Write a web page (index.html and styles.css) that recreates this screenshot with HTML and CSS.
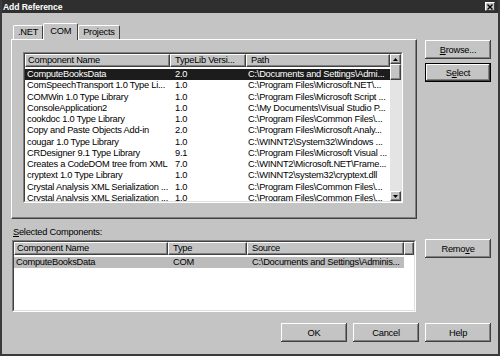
FILE: index.html
```html
<!DOCTYPE html>
<html lang="en">
<head>
  <title>Add Reference</title>
  <link rel="stylesheet" href="styles.css">
</head>
<body>
  <div class="window">
    <div class="titlebar">
      <span>Add Reference</span>
      <span class="close">
        <svg width="6" height="6" viewBox="0 0 6 6"><path d="M0.5 0.5L5.5 5.5M5.5 0.5L0.5 5.5" stroke="#000" stroke-width="1.4"/></svg>
      </span>
    </div>

    <div class="content">
      <div class="upper">
        <div class="tabs">
          <span class="tab">.NET</span>
          <span class="tab active">COM</span>
          <span class="tab">Projects</span>
        </div>
        <div class="panel">
          <div class="list top-list">
            <div class="list-in">
              <div class="cols">
                <div class="head">
                  <span class="c1">Component Name</span>
                  <span class="c2">TypeLib Versi...</span>
                  <span class="c3">Path</span>
                </div>
                <div class="rows">
                  <div class="row selected"><span class="c1">ComputeBooksData</span><span class="c2">2.0</span><span class="c3">C:\Documents and Settings\Admi...</span></div>
                  <div class="row"><span class="c1">ComSpeechTransport 1.0 Type Li...</span><span class="c2">1.0</span><span class="c3">C:\Program Files\Microsoft.NET\...</span></div>
                  <div class="row"><span class="c1">COMWin 1.0 Type Library</span><span class="c2">1.0</span><span class="c3">C:\Program Files\Microsoft Script ...</span></div>
                  <div class="row"><span class="c1">ConsoleApplication2</span><span class="c2">1.0</span><span class="c3">C:\My Documents\Visual Studio P...</span></div>
                  <div class="row"><span class="c1">cookdoc 1.0 Type Library</span><span class="c2">1.0</span><span class="c3">C:\Program Files\Common Files\...</span></div>
                  <div class="row"><span class="c1">Copy and Paste Objects Add-in</span><span class="c2">2.0</span><span class="c3">C:\Program Files\Microsoft Analy...</span></div>
                  <div class="row"><span class="c1">cougar 1.0 Type Library</span><span class="c2">1.0</span><span class="c3">C:\WINNT2\System32\Windows ...</span></div>
                  <div class="row"><span class="c1">CRDesigner 9.1 Type Library</span><span class="c2">9.1</span><span class="c3">C:\Program Files\Microsoft Visual ...</span></div>
                  <div class="row"><span class="c1">Creates a CodeDOM tree from XML</span><span class="c2">7.0</span><span class="c3">C:\WINNT2\Microsoft.NET\Frame...</span></div>
                  <div class="row"><span class="c1">cryptext 1.0 Type Library</span><span class="c2">1.0</span><span class="c3">C:\WINNT2\system32\cryptext.dll</span></div>
                  <div class="row"><span class="c1">Crystal Analysis XML Serialization ...</span><span class="c2">1.0</span><span class="c3">C:\Program Files\Common Files\...</span></div>
                  <div class="row"><span class="c1">Crystal Analysis XML Serialization ...</span><span class="c2">1.0</span><span class="c3">C:\Program Files\Common Files\...</span></div>
                </div>
              </div>
              <div class="scroll">
                <span class="sb-btn">
                  <svg width="5" height="3" viewBox="0 0 5 3"><path d="M2.5 0L5 3H0Z" fill="#000"/></svg>
                </span>
                <span class="sb-thumb"></span>
                <span class="sb-track"></span>
                <span class="sb-btn">
                  <svg width="5" height="3" viewBox="0 0 5 3"><path d="M0 0H5L2.5 3Z" fill="#000"/></svg>
                </span>
              </div>
            </div>
          </div>
        </div>
      </div>

      <div class="side">
        <button class="btn"><u>B</u>rowse...</button>
        <button class="btn default">S<u>e</u>lect</button>
      </div>

      <div class="lower">
        <div class="label"><u>S</u>elected Components:</div>
        <div class="list bottom-list">
          <div class="list-in">
            <div class="cols">
              <div class="head">
                <span class="b1">Component Name</span>
                <span class="b2">Type</span>
                <span class="b3">Source</span>
                <span class="b4"></span>
              </div>
              <div class="rows">
                <div class="row inactive"><span class="b1">ComputeBooksData</span><span class="b2">COM</span><span class="b3">C:\Documents and Settings\Adminis...</span></div>
              </div>
            </div>
          </div>
        </div>
      </div>

      <div class="side lower-side">
        <button class="btn">Remo<u>v</u>e</button>
      </div>

      <div class="footer">
        <button class="btn">OK</button>
        <button class="btn">Cancel</button>
        <button class="btn">Help</button>
      </div>
    </div>
  </div>
</body>
</html>
```

FILE: styles.css
```css
body {
  margin: 0;
  font-family: 'Liberation Sans', Arial, sans-serif;
  font-size: 9.3px;
  letter-spacing: -0.25px;
  color: #000;
  background: #c4c4c4;
}

.window {
  width: 500px;
  height: 356px;
  box-sizing: border-box;
  border: 2px solid #3a3a3a;
  border-top: none;
  background: #c4c4c4;
}

.titlebar {
  height: 13px;
  background: #2f2f2f;
  color: #fff;
  font-weight: bold;
  font-size: 8.6px;
  letter-spacing: -0.1px;
  display: flex;
  align-items: center;
  justify-content: space-between;
  padding: 0 3px 0 1px;
}

.close {
  width: 10px;
  height: 9px;
  box-sizing: border-box;
  background: #c4c4c4;
  border: 1px solid;
  border-color: #fff #404040 #404040 #fff;
  display: flex;
  align-items: center;
  justify-content: center;
}

.content {
  display: grid;
  grid-template-columns: 406px 66px;
  column-gap: 8px;
  padding: 10px 7px 0 9px;
}

/* tabs */
.tabs {
  display: flex;
  align-items: flex-end;
  height: 16px;
  padding-left: 2px;
}

.tab {
  position: relative;
  height: 14px;
  box-sizing: border-box;
  padding: 0 4px;
  line-height: 13px;
  border: 1px solid;
  border-color: #fff #404040 transparent #fff;
  border-bottom: none;
  border-radius: 2px 2px 0 0;
  background: #c4c4c4;
}

.tab.active {
  height: 17px;
  margin-bottom: -1px;
  padding: 0 6px;
  line-height: 14px;
  z-index: 1;
}

.panel {
  height: 180px;
  box-sizing: border-box;
  border: 1px solid;
  border-color: #fff #404040 #404040 #fff;
  box-shadow: inset -1px -1px #808080;
  padding: 12px 13px 15px 11px;
}

/* list views */
.list {
  box-sizing: border-box;
  border: 1px solid;
  border-color: #808080 #fff #fff #808080;
}

.top-list {
  height: 151px;
}

.bottom-list {
  height: 72px;
  margin: 0 1px;
}

.list-in {
  height: 100%;
  box-sizing: border-box;
  border: 1px solid;
  border-color: #404040 #dfdfdf #dfdfdf #404040;
  background: #fff;
  display: flex;
  overflow: hidden;
}

.cols {
  flex: 1;
  min-width: 0;
}

.head {
  display: flex;
  height: 13px;
  background: #c4c4c4;
}

.head span {
  box-sizing: border-box;
  border: 1px solid;
  border-color: #fff #404040 #404040 #fff;
  box-shadow: inset -1px -1px #808080;
  padding-left: 4px;
  line-height: 11px;
  white-space: nowrap;
  overflow: hidden;
}

.head .c1, .head .b1 {
  padding-left: 2px;
}

.rows {
  padding-top: 2px;
}

.row {
  display: flex;
  width: max-content;
  height: 11.25px;
  line-height: 11.25px;
  white-space: nowrap;
}

.row span {
  overflow: hidden;
  box-sizing: border-box;
  padding-left: 5px;
}

.row .c1, .row .b1 {
  padding-left: 2px;
}

.row .c3 {
  padding-left: 2px;
}

.row.selected {
  background: #1c1c1c;
  color: #fff;
}

.row.inactive {
  background: #bcbcbc;
}

.c1 { width: 145px; }
.c2 { width: 76px; }
.c3 { width: 144px; }

.b1 { width: 154px; }
.b2 { width: 79px; }
.b3 { width: 157px; }
.head .b4 { flex: 1; }

/* scrollbar */
.scroll {
  width: 11px;
  display: flex;
  flex-direction: column;
  background: #e4e4e4;
}

.sb-btn, .sb-thumb {
  box-sizing: border-box;
  background: #c4c4c4;
  border: 1px solid;
  border-color: #fff #404040 #404040 #fff;
  box-shadow: inset -1px -1px #808080;
}

.sb-btn {
  height: 10px;
  display: flex;
  align-items: center;
  justify-content: center;
}

.sb-thumb {
  height: 16px;
}

.sb-track {
  flex: 1;
}

/* buttons */
.side {
  display: flex;
  flex-direction: column;
  gap: 4px;
  padding-top: 17px;
}

.lower-side {
  padding-top: 20px;
}

.label {
  height: 14px;
  line-height: 13px;
  margin-top: 7px;
  padding-left: 2px;
}

.btn {
  width: 66px;
  height: 19px;
  box-sizing: border-box;
  padding: 0;
  font: inherit;
  letter-spacing: inherit;
  color: #000;
  background: #c4c4c4;
  border: none;
  box-shadow: inset -1px -1px #404040, inset 1px 1px #fff, inset -2px -2px #808080;
}

.btn.default {
  border: 1px solid #000;
}

.footer {
  grid-column: 1 / -1;
  display: flex;
  justify-content: flex-end;
  gap: 6px;
  margin-top: 11px;
}
```
